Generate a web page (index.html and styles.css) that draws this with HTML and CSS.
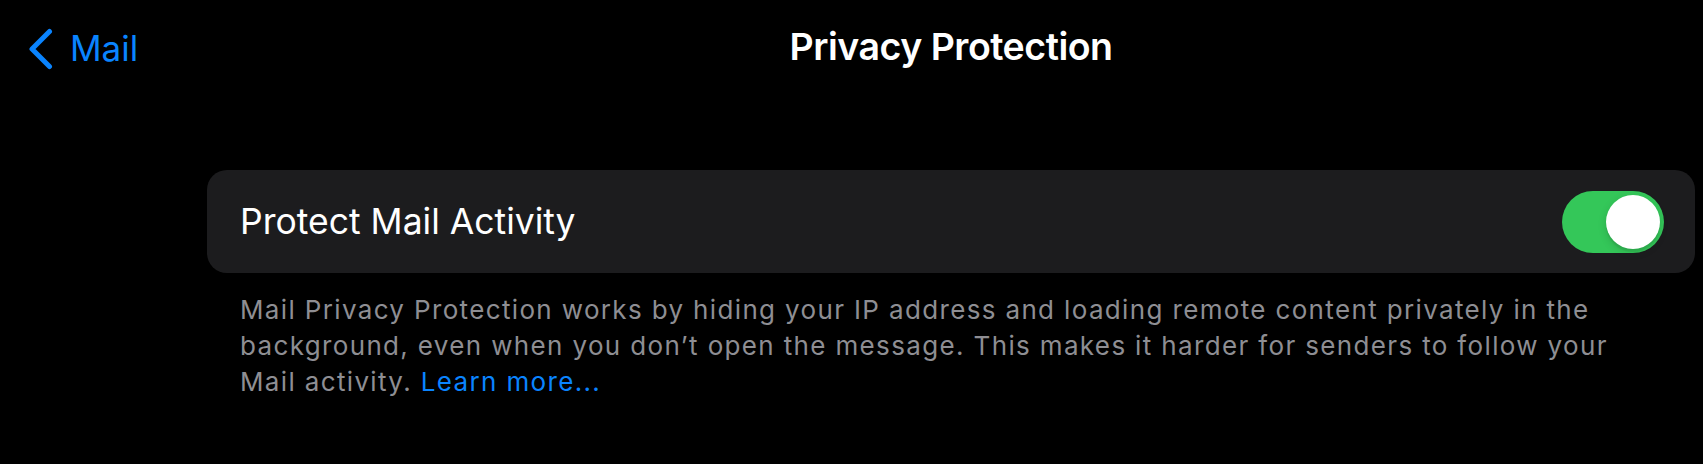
FILE: index.html
```html
<!DOCTYPE html>
<html lang="en">
<head>
<meta charset="utf-8">
<title>Privacy Protection</title>
<link rel="stylesheet" href="styles.css">
</head>
<body>
<div class="page">
  <header class="nav">
    <a class="back" href="#">
      <svg class="chev" width="26" height="42" viewBox="0 0 26 42" aria-hidden="true">
        <path d="M22.5 3.5 L5 21 L22.5 38.5" fill="none" stroke="#0a84ff" stroke-width="5" stroke-linecap="round" stroke-linejoin="round"/>
      </svg>
      <span class="back-label">Mail</span>
    </a>
    <h1 class="title">Privacy Protection</h1>
  </header>
  <main class="content">
    <section class="card">
      <span class="row-label">Protect Mail Activity</span>
      <span class="toggle on"><span class="knob"></span></span>
    </section>
    <p class="footer">Mail Privacy Protection works by hiding your IP address and loading remote content privately in the background, even when you don’t open the message. This makes it harder for senders to follow your Mail activity. <a class="link" href="#">Learn more...</a></p>
  </main>
</div>
</body>
</html>
```

FILE: styles.css
```css
html, body {
  margin: 0;
  padding: 0;
  background: #000;
}
body {
  font-family: Inter, "Noto Sans", sans-serif;
  color: #fff;
  width: 1703px;
  height: 464px;
  overflow: hidden;
}
.page {
  display: grid;
  grid-template-columns: 207px 1fr 8px;
}
.nav {
  grid-column: 1 / -1;
  display: grid;
  grid-template-columns: 207px 1fr 8px;
  height: 96px;
  align-items: start;
}
.back {
  display: flex;
  align-items: flex-start;
  text-decoration: none;
  color: #0a84ff;
  padding-left: 27px;
  padding-top: 28px;
}
.chev {
  display: block;
  flex: none;
}
.back-label {
  font-size: 35px;
  line-height: 44px;
  margin-left: 17px;
  margin-top: -2px;
}
.title {
  grid-column: 2;
  margin: 0;
  text-align: center;
  font-size: 37.5px;
  font-weight: 600;
  line-height: 48px;
  padding-top: 23px;
  letter-spacing: -0.5px;
}
.content {
  grid-column: 2;
  padding-top: 74px;
}
.card {
  height: 103px;
  background: #1c1c1e;
  border-radius: 20px;
  display: flex;
  align-items: center;
  justify-content: space-between;
  padding: 0 31px 0 33px;
}
.row-label {
  font-size: 35.5px;
  line-height: 46px;
}
.toggle {
  width: 102px;
  height: 62px;
  border-radius: 31px;
  background: #34c759;
  display: flex;
  align-items: center;
  justify-content: flex-end;
  padding: 0 4px;
  box-sizing: border-box;
}
.knob {
  width: 54px;
  height: 54px;
  border-radius: 50%;
  background: #fff;
  box-shadow: 0 3px 8px rgba(0,0,0,0.15), 0 3px 1px rgba(0,0,0,0.06);
}
.footer {
  margin: 0;
  padding: 19px 45px 0 33px;
  font-size: 26px;
  line-height: 36px;
  color: #8e8e93;
  letter-spacing: 1.35px;
}
.link {
  color: #0a84ff;
  text-decoration: none;
}
```
